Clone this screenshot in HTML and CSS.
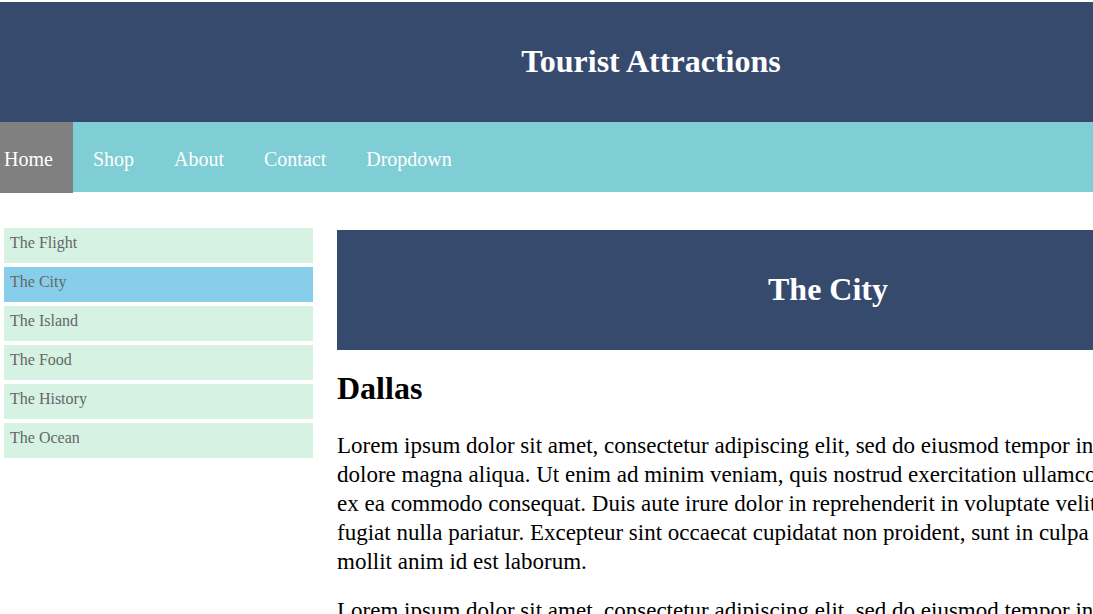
FILE: index.html
```html
<!DOCTYPE html>
<html>
<head>
<meta charset="utf-8">
<title>Tourist Attractions</title>
<link rel="stylesheet" href="styles.css">
</head>
<body>
<div class="page">
  <header class="site-header"><h1>Tourist Attractions</h1></header>
  <nav class="topnav">
    <a class="nav-item active" href="#">Home</a>
    <a class="nav-item" href="#">Shop</a>
    <a class="nav-item" href="#">About</a>
    <a class="nav-item" href="#">Contact</a>
    <a class="nav-item" href="#">Dropdown</a>
  </nav>
  <div class="layout">
    <aside class="sidebar">
      <a class="side-item" href="#">The Flight</a>
      <a class="side-item current" href="#">The City</a>
      <a class="side-item" href="#">The Island</a>
      <a class="side-item" href="#">The Food</a>
      <a class="side-item" href="#">The History</a>
      <a class="side-item" href="#">The Ocean</a>
    </aside>
    <main class="content">
      <div class="banner"><h1>The City</h1></div>
      <h2 class="title">Dallas</h2>
      <p>Lorem ipsum dolor sit amet, consectetur adipiscing elit, sed do eiusmod tempor incididunt ut labore et dolore magna aliqua. Ut enim ad minim veniam, quis nostrud exercitation ullamco laboris nisi ut aliquip ex ea commodo consequat. Duis aute irure dolor in reprehenderit in voluptate velit esse cillum dolore eu fugiat nulla pariatur. Excepteur sint occaecat cupidatat non proident, sunt in culpa qui officia deserunt mollit anim id est laborum.</p>
      <p>Lorem ipsum dolor sit amet, consectetur adipiscing elit, sed do eiusmod tempor incididunt ut labore et dolore magna aliqua. Ut enim ad minim veniam, quis nostrud exercitation ullamco laboris nisi ut aliquip ex ea commodo consequat. Duis aute irure dolor in reprehenderit in voluptate velit esse cillum dolore eu fugiat nulla pariatur. Excepteur sint occaecat cupidatat non proident, sunt in culpa qui officia deserunt mollit anim id est laborum.</p>
    </main>
  </div>
</div>
</body>
</html>
```
FILE: styles.css
```css
html, body {
  margin: 0;
  padding: 0;
}
body {
  font-family: "Liberation Serif", "Times New Roman", serif;
  background: #fff;
  color: #000;
}
.page {
  width: 1320px;
  padding-top: 2px;
}
.site-header {
  background: #364a6d;
  height: 120px;
  width: 1302px;
  box-sizing: border-box;
  padding-bottom: 2px;
  display: flex;
  align-items: center;
  justify-content: center;
}
.site-header h1,
.banner h1 {
  margin: 0;
  color: #fff;
  font-size: 32px;
  font-weight: bold;
}
.topnav {
  background: #7fcdd5;
  height: 70px;
  width: 1302px;
  display: flex;
  align-items: stretch;
}
.nav-item {
  display: flex;
  align-items: center;
  padding: 4px 20px 0;
  color: #fff;
  text-decoration: none;
  font-size: 20px;
}
.nav-item.active {
  background: #808080;
  padding-left: 4px;
  margin-bottom: -1px;
}
.layout {
  display: flex;
  gap: 24px;
  padding: 36px 0 0 4px;
}
.sidebar {
  width: 309px;
  flex: none;
  display: flex;
  flex-direction: column;
  gap: 4px;
}
.side-item {
  display: flex;
  align-items: center;
  height: 35px;
  padding: 0 0 6px 6px;
  box-sizing: border-box;
  background: #d5f2e3;
  color: #666;
  font-size: 16px;
  text-decoration: none;
}
.side-item.current {
  background: #87ceeb;
}
.content {
  width: 982px;
  flex: none;
  padding-top: 2px;
}
.banner {
  background: #364a6d;
  height: 120px;
  box-sizing: border-box;
  padding-bottom: 2px;
  display: flex;
  align-items: center;
  justify-content: center;
}
.title {
  font-size: 32px;
  font-weight: bold;
  margin: 20px 0 24px;
}
.content p {
  font-size: 23px;
  line-height: 29px;
  margin: 0 0 20px;
}
```
